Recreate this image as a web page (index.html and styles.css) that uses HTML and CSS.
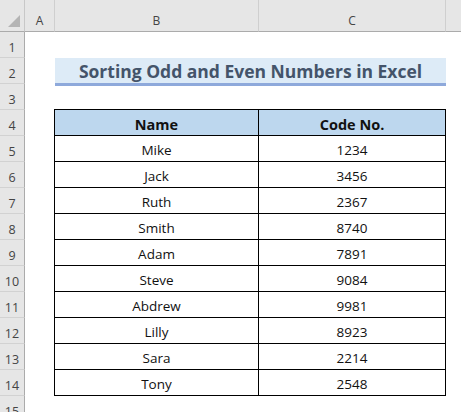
FILE: index.html
```html
<!DOCTYPE html>
<html>
<head>
<meta charset="utf-8">
<link rel="stylesheet" href="styles.css">
</head>
<body>
<div class="sheet">
  <div class="corner"><span class="tri"></span></div>
  <div class="colhead">A</div>
  <div class="colhead">B</div>
  <div class="colhead">C</div>
  <div class="colhead last"></div>

  <div class="rowhead r1">1</div>
  <div class="rowhead r2">2</div>
  <div class="rowhead r3">3</div>
  <div class="rowhead r4">4</div>
  <div class="rowhead r5">5</div>
  <div class="rowhead r6">6</div>
  <div class="rowhead r7">7</div>
  <div class="rowhead r8">8</div>
  <div class="rowhead r9">9</div>
  <div class="rowhead r10">10</div>
  <div class="rowhead r11">11</div>
  <div class="rowhead r12">12</div>
  <div class="rowhead r13">13</div>
  <div class="rowhead r14">14</div>
  <div class="rowhead r15">15</div>

  <div class="title">Sorting Odd and Even Numbers in Excel</div>

  <div class="data">
    <div class="cell th">Name</div><div class="cell th">Code No.</div>
    <div class="cell">Mike</div><div class="cell">1234</div>
    <div class="cell">Jack</div><div class="cell">3456</div>
    <div class="cell">Ruth</div><div class="cell">2367</div>
    <div class="cell">Smith</div><div class="cell">8740</div>
    <div class="cell">Adam</div><div class="cell">7891</div>
    <div class="cell">Steve</div><div class="cell">9084</div>
    <div class="cell">Abdrew</div><div class="cell">9981</div>
    <div class="cell">Lilly</div><div class="cell">8923</div>
    <div class="cell">Sara</div><div class="cell">2214</div>
    <div class="cell">Tony</div><div class="cell">2548</div>
  </div>
</div>
</body>
</html>
```
FILE: styles.css
```css
html, body {
  margin: 0;
  padding: 0;
  background: #ffffff;
}
.sheet {
  display: grid;
  grid-template-columns: 25px 30px 204px 187px 1fr;
  grid-template-rows: 32px repeat(15, 26px);
  width: 461px;
  height: 412px;
  overflow: hidden;
  font-family: "Open Sans", "Liberation Sans", sans-serif;
}
.corner {
  grid-column: 1;
  grid-row: 1;
  background: #e6e6e6;
  border-right: 1px solid #c8c8c8;
  border-bottom: 1px solid #ababab;
  position: relative;
}
.tri {
  position: absolute;
  right: 4px;
  bottom: 4px;
  width: 0;
  height: 0;
  border-left: 12px solid transparent;
  border-bottom: 12px solid #b4b4b4;
}
.colhead {
  grid-row: 1;
  background: #e6e6e6;
  border-right: 1px solid #cfcfcf;
  border-bottom: 1px solid #ababab;
  display: flex;
  align-items: center;
  justify-content: center;
  padding-top: 10px;
  box-sizing: border-box;
  font-size: 12px;
  color: #444444;
}
.colhead.last {
  border-right: none;
}
.rowhead {
  grid-column: 1;
  background: #e6e6e6;
  border-right: 1px solid #ababab;
  border-bottom: 1px solid #d2d2d2;
  display: flex;
  align-items: center;
  justify-content: center;
  padding-top: 5px;
  box-sizing: border-box;
  font-size: 12.5px;
  color: #444444;
}
.r1 { grid-row: 2; }
.r2 { grid-row: 3; }
.r3 { grid-row: 4; }
.r4 { grid-row: 5; }
.r5 { grid-row: 6; }
.r6 { grid-row: 7; }
.r7 { grid-row: 8; }
.r8 { grid-row: 9; }
.r9 { grid-row: 10; }
.r10 { grid-row: 11; }
.r11 { grid-row: 12; }
.r12 { grid-row: 13; }
.r13 { grid-row: 14; }
.r14 { grid-row: 15; }
.r15 { grid-row: 16; }
.title {
  grid-column: 3 / 5;
  grid-row: 3;
  background: #ddebf7;
  border-bottom: 3px solid #8ea9db;
  margin-bottom: -2px;
  display: flex;
  align-items: center;
  justify-content: center;
  font-weight: 700;
  font-size: 17.5px;
  color: #44546a;
}
.data {
  grid-column: 3 / 5;
  grid-row: 5 / 16;
  display: grid;
  grid-template-columns: 204px 187px;
  grid-auto-rows: 26px;
  border-top: 1px solid #000;
  border-left: 1px solid #000;
  margin-top: -1px;
  margin-left: -1px;
  width: 392px;
  box-sizing: border-box;
}
.cell {
  border-right: 1px solid #000;
  border-bottom: 1px solid #000;
  display: flex;
  align-items: center;
  justify-content: center;
  padding-top: 3px;
  box-sizing: border-box;
  font-size: 13.5px;
  color: #111;
}
.cell.th {
  background: #bdd7ee;
  font-weight: 700;
  font-size: 14.5px;
}
```
